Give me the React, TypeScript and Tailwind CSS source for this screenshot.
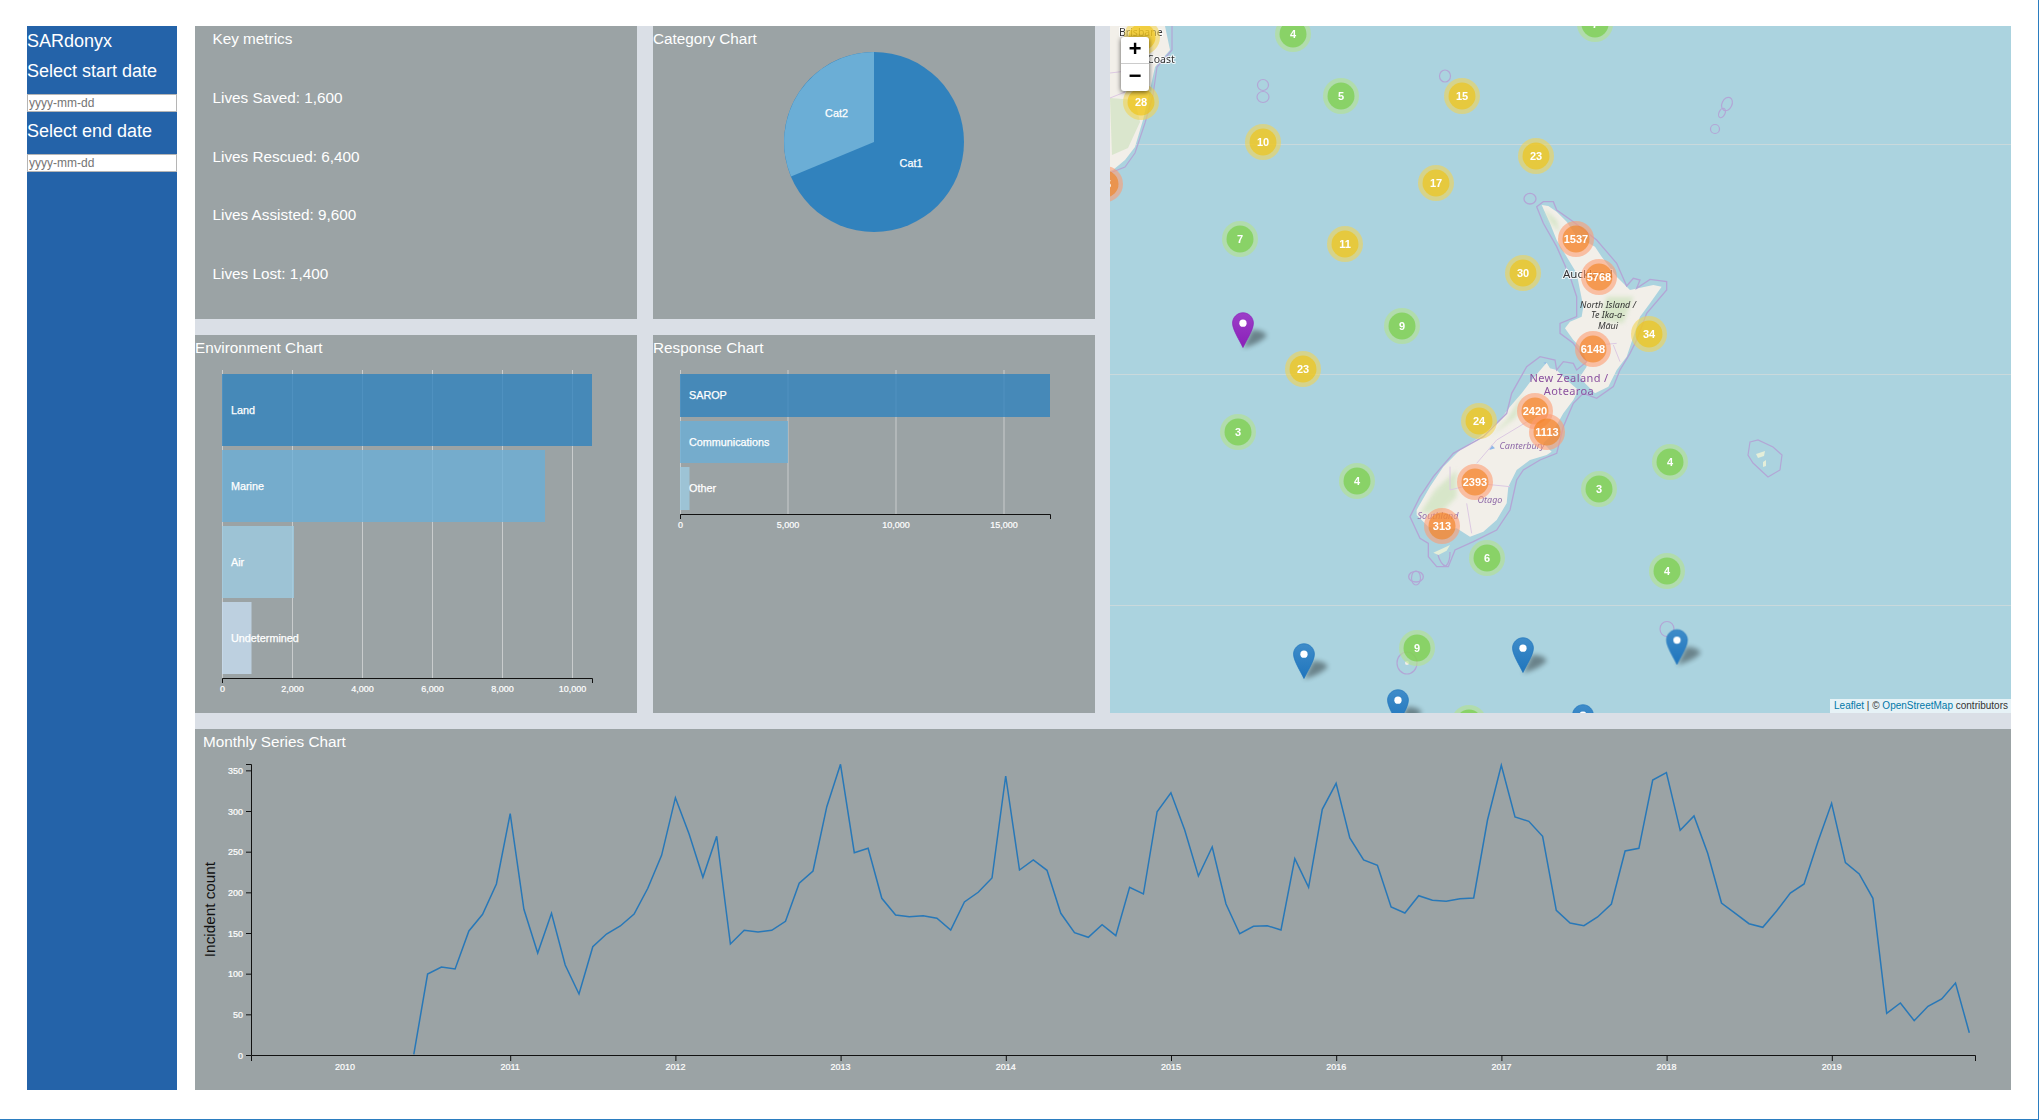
import React from "react";

const C = {
  green: ["#b5e28c99", "#6ecc3999"],
  yellow: ["#f1d35799", "#f0c20c99"],
  orange: ["#fd9c7399", "#f1801799"],
} as const;

const clusters: [number, number, string, keyof typeof C][] = [
  [1142, 37, "", "yellow"],
  [1141, 102, "28", "yellow"],
  [1293, 34, "4", "green"],
  [1341, 96, "5", "green"],
  [1462, 96, "15", "yellow"],
  [1263, 142, "10", "yellow"],
  [1536, 156, "23", "yellow"],
  [1436, 183, "17", "yellow"],
  [1240, 239, "7", "green"],
  [1345, 244, "11", "yellow"],
  [1523, 273, "30", "yellow"],
  [1402, 326, "9", "green"],
  [1105, 184, "65", "orange"],
  [1595, 24, "7", "green"],
  [1576, 239, "1537", "orange"],
  [1599, 277, "5768", "orange"],
  [1649, 334, "34", "yellow"],
  [1593, 349, "6148", "orange"],
  [1479, 421, "24", "yellow"],
  [1535, 411, "2420", "orange"],
  [1547, 432, "1113", "orange"],
  [1670, 462, "4", "green"],
  [1599, 489, "3", "green"],
  [1475, 482, "2393", "orange"],
  [1442, 526, "313", "orange"],
  [1487, 558, "6", "green"],
  [1667, 571, "4", "green"],
  [1303, 369, "23", "yellow"],
  [1238, 432, "3", "green"],
  [1357, 481, "4", "green"],
  [1417, 648, "9", "green"],
  [1469, 723, "", "green"],
];

const series = [
  1003, 762, 741, 747, 633, 583, 492, 281, 568, 699, 580, 735, 822, 680, 642, 618, 582, 505, 406, 233, 342, 472, 349,
  672, 631, 636, 631, 604, 490, 453, 260, 133, 398, 385, 535, 585, 590, 587, 595, 630, 546, 517, 474, 168, 450, 420,
  451, 580, 638, 652, 614, 647, 502, 522, 275, 218, 330, 468, 381, 552, 641, 619, 617, 630, 416, 502, 268, 190, 354,
  420, 436, 561, 579, 527, 541, 544, 536, 534, 300, 136, 291, 304, 349, 571, 609, 617, 591, 552, 393, 385, 180, 158,
  331, 288, 400, 549, 580, 611, 622, 573, 519, 492, 365, 250, 428, 462, 535, 880, 849, 902, 859, 837, 789, 938,
];
const linePoints = series.map((v, i) => `${(345 + (i + 5) * 13.765).toFixed(1)},${(720 + v / 3).toFixed(1)}`).join(" ");

const years = [2010, 2011, 2012, 2013, 2014, 2015, 2016, 2017, 2018, 2019];
const yTicks = [0, 50, 100, 150, 200, 250, 300, 350];

const panel = "bg-[#9ba3a5] text-white";
const title = "h-[26px] leading-[26px] text-[15.3px]";
const tickText = "fill-white stroke-white stroke-[0.2px] text-[9px]";
const barText = "fill-white stroke-white stroke-[0.25px] text-[10.8px]";

function Cluster({ x, y, label, tone }: { x: number; y: number; label: string; tone: keyof typeof C }) {
  return (
    <g>
      <circle cx={x} cy={y} r={18} fill={C[tone][0]} />
      <circle cx={x} cy={y} r={13.5} fill={C[tone][1]} />
      {label && (
        <text x={x} y={y + 4} textAnchor="middle" className="fill-white text-[11px] font-bold">
          {label}
        </text>
      )}
    </g>
  );
}

function Marker({ tipX, tipY, c1, c2, id }: { tipX: number; tipY: number; c1: string; c2: string; id: string }) {
  return (
    <g transform={`translate(${tipX - 10.9} ${tipY - 35.7}) scale(0.87)`}>
      <defs>
        <linearGradient id={id} x1="0" y1="0" x2="0" y2="1">
          <stop offset="0" stopColor={c1} />
          <stop offset="1" stopColor={c2} />
        </linearGradient>
      </defs>
      <path d="M12.5 41L23 20Q36 20 40 27Q32 36 12.5 41Z" fill="#000" opacity="0.38" filter="url(#shadowBlur)" />
      <path
        d="M12.5 .5C5.9 .5 .5 5.9 .5 12.5C.5 20 9 33 12.5 40.5C16 33 24.5 20 24.5 12.5C24.5 5.9 19.1 .5 12.5 .5Z"
        fill={`url(#${id})`}
        stroke={c2}
        strokeWidth="0.8"
      />
      <circle cx="12.5" cy="12.5" r="4.2" fill="#fff" />
    </g>
  );
}

function MapArt() {
  return (
    <svg viewBox="1110 26 901 687" className="block h-full w-full">
      <defs>
        <filter id="shadowBlur" x="-60%" y="-60%" width="220%" height="220%">
          <feGaussianBlur stdDeviation="3.2" />
        </filter>
        <filter id="soft" x="-5%" y="-5%" width="110%" height="110%">
          <feGaussianBlur stdDeviation="0.35" />
        </filter>
        <filter id="patch" x="-20%" y="-20%" width="140%" height="140%">
          <feGaussianBlur stdDeviation="6" />
        </filter>
      </defs>
      <rect x="1110" y="26" width="901" height="687" fill="#abd3df" />
      <g stroke="#c9d9dc" strokeWidth="1">
        <line x1="1110" y1="144.5" x2="2011" y2="144.5" />
        <line x1="1110" y1="374.5" x2="2011" y2="374.5" />
        <line x1="1110" y1="605.5" x2="2011" y2="605.5" />
      </g>
      <g filter="url(#soft)">
        {/* Australian coast */}
        <path d="M1110 26H1165L1170 50L1155 67L1150 90L1143 120L1135 147L1125 160L1113 170L1110 171Z" fill="#f2efe9" />
        <path d="M1110 98L1135 100L1140 122L1128 148L1112 155Z" fill="#d3e4c6" opacity="0.8" />
        <path
          d="M1172 26L1172 50L1157 67L1153 95L1145 123L1135 153L1125 167L1110 173"
          fill="none"
          stroke="#b3a6d6"
          strokeWidth="1.2"
        />
        <path d="M1110 98L1125 92M1110 73L1135 70" fill="none" stroke="#d7bfe0" strokeWidth="0.8" />
        {/* Small islands */}
        <g fill="none" stroke="#b3a6d6" strokeWidth="1.2">
          <ellipse cx="1263" cy="85" rx="5.5" ry="5.5" />
          <ellipse cx="1263" cy="97" rx="6" ry="5.5" />
          <ellipse cx="1445" cy="76" rx="5.5" ry="6" />
          <ellipse cx="1416" cy="578" rx="4.5" ry="7" />
          <path d="M1437 552Q1441 566 1446 566Q1450 562 1450 552" />
          <ellipse cx="1407" cy="663" rx="10" ry="11" />
          <ellipse cx="1667" cy="629" rx="7" ry="7.5" />
          <ellipse cx="1727" cy="104" rx="5" ry="7" transform="rotate(25 1727 104)" />
          <ellipse cx="1715" cy="129" rx="4.5" ry="4.5" />
          <ellipse cx="1722" cy="113" rx="3" ry="5" transform="rotate(25 1722 113)" />
          <path d="M1750 442L1758 440L1773 447L1782 455L1780 470L1768 477L1753 463L1748 455Z" />
        </g>
        <path d="M1756 454L1765 451L1764 456L1758 458Z M1763 462L1766 460L1766 466L1763 467Z" fill="#e4eed9" />
        <circle cx="1407" cy="663" r="2" fill="#f2efe9" />
        {/* New Zealand */}
        <g transform="translate(1400 180) scale(0.33333)">
          <path
            d="M425 75L445 78L470 95L500 125L530 170L585 200L605 230L650 290L690 330L760 315L785 320L750 370L720 410L700 470L680 530L650 570L625 620L585 640L555 610L540 590L560 560L550 510L520 480L495 445L510 425L545 410L550 380L540 330L530 280L500 230L470 180L450 130Z"
            fill="#f2efe9"
          />
          <path
            d="M440 548L450 565L470 570L500 600L535 630L520 660L490 700L450 770L430 790L455 815L440 825L390 840L350 870L325 920L320 970L290 1020L250 1055L210 1070L170 1045L130 1050L85 1040L50 1005L50 990L90 920L130 860L180 810L240 770L300 720L330 680L365 640L395 600Z"
            fill="#f2efe9"
          />
          <path d="M100 1118L150 1095L140 1112L115 1125Z" fill="#e4eed9" />
          <g fill="#cfe3bf" opacity="0.75" filter="url(#patch)">
            <path d="M430 85L470 120L480 160L450 125Z" />
            <path d="M620 350L700 350L670 430L600 420Z" />
            <path d="M60 1000L105 930L170 870L170 950L120 1000Z" />
            <path d="M370 640L320 720L270 770L350 710Z" />
          </g>
          <path d="M275 795L285 805L268 810Z" fill="#8fb8e8" />
          <path d="M430 548L440 546L436 552Z" fill="#8fb8e8" />
          <path
            d="M410 80L430 65L460 65L470 90L520 125L590 180L620 215L650 250L680 318L700 295L720 300L710 325L750 298L800 305L800 330L740 400L710 480L690 520L660 570L640 620L590 655L550 640L520 670L490 740L470 820L420 840L370 870L350 900L330 990L290 1050L220 1085L165 1110L145 1160L110 1160L85 1130L85 1090L60 1075L30 1010L60 950L100 890L160 820L250 770L320 700L335 640L380 560L420 530L465 540L470 570L490 545L520 550L530 570L560 545L520 490L480 460L480 430L530 410L530 350L510 290L470 200L430 130Z"
            fill="none"
            stroke="#b3a6d6"
            strokeWidth="4"
          />
          <ellipse cx="390" cy="56" rx="18" ry="16" fill="none" stroke="#b3a6d6" strokeWidth="4" />
          <ellipse cx="48" cy="1190" rx="22" ry="16" fill="none" stroke="#b3a6d6" strokeWidth="4" />
          <path
            d="M640 495L660 545M150 860L150 930L230 910L330 920M200 970L215 1060M230 850L290 780L440 690M540 500L650 490"
            fill="none"
            stroke="#dcc9e2"
            strokeWidth="3"
          />
        </g>
        {/* Place names */}
        <g fontFamily="'Noto Sans', 'Open Sans', sans-serif" fill="#333" stroke="#ffffffcc" strokeWidth="2" paintOrder="stroke">
          <text x="1119" y="36" className="text-[10.5px]">Brisbane</text>
          <text x="1147" y="63" className="text-[10.5px]">Coast</text>
          <text x="1563" y="278" className="text-[11.5px]">Auckland</text>
        </g>
        <g fontFamily="'Noto Sans', 'Open Sans', sans-serif" textAnchor="middle">
          <g className="text-[9px] italic" fill="#333">
            <text x="1608" y="307.5">North Island /</text>
            <text x="1608" y="318">Te Ika-a-</text>
            <text x="1608" y="329">Māui</text>
          </g>
          <g className="text-[11px] tracking-[0.4px]" fill="#8a4f9e">
            <text x="1569" y="382">New Zealand /</text>
            <text x="1569" y="395">Aotearoa</text>
          </g>
          <g className="text-[9px] italic" fill="#8f6aa8">
            <text x="1522" y="449">Canterbury</text>
            <text x="1490" y="503">Otago</text>
            <text x="1438" y="519">Southland</text>
          </g>
        </g>
      </g>
      <g filter="url(#soft)">
        {clusters.map(([x, y, label, tone], i) => (
          <Cluster key={i} x={x} y={y} label={label} tone={tone} />
        ))}
      </g>
      <Marker id="mPurple" tipX={1243} tipY={348} c1="#9c3fc8" c2="#8a1fb8" />
      <Marker id="mB1" tipX={1304} tipY={679} c1="#3f8cc9" c2="#1f75bd" />
      <Marker id="mB2" tipX={1523} tipY={673} c1="#3f8cc9" c2="#1f75bd" />
      <Marker id="mB3" tipX={1677} tipY={665} c1="#3f8cc9" c2="#1f75bd" />
      <Marker id="mB4" tipX={1398} tipY={725} c1="#3f8cc9" c2="#1f75bd" />
      <Marker id="mB5" tipX={1583} tipY={740} c1="#3f8cc9" c2="#1f75bd" />
    </svg>
  );
}

function fmt(n: number) {
  return n.toLocaleString("en-US");
}

function BarChart({
  box,
  x0,
  x1,
  axisY,
  ticks,
  bars,
}: {
  box: string;
  x0: number;
  x1: number;
  axisY: number;
  ticks: [number, number][];
  bars: { label: string; y1: number; y2: number; end: number; fill: string; ly: number }[];
}) {
  return (
    <svg viewBox={box} className="block w-full flex-1">
      {ticks.map(([v, x]) => (
        <line key={v} x1={x + 0.5} x2={x + 0.5} y1={370} y2={axisY} stroke="#c9cccd" strokeWidth="1" />
      ))}
      {bars.map((b) => (
        <rect key={b.label} x={x0} y={b.y1} width={b.end - x0} height={b.y2 - b.y1} fill={b.fill} fillOpacity="0.8" />
      ))}
      {bars.map((b) => (
        <text key={b.label} x={x0 + 9} y={b.ly + 3.5} className={barText}>
          {b.label}
        </text>
      ))}
      <path d={`M${x0 + 0.5} ${axisY + 5}V${axisY + 0.5}H${x1 + 0.5}V${axisY + 5}`} fill="none" stroke="#111" />
      {ticks.map(([v, x]) => (
        <text key={v} x={x + 0.5} y={axisY + 14} textAnchor="middle" className={tickText}>
          {fmt(v)}
        </text>
      ))}
    </svg>
  );
}

export default function App() {
  return (
    <div className="flex h-[1120px] w-[2039px] border-r border-b border-[#2b7dc0] bg-white pt-[26px] pl-[27px] font-['Liberation_Sans',sans-serif]">
      <aside className="flex h-[1064px] w-[150px] flex-col bg-[#2463a9] text-[18px] text-white">
        <div className="h-[30px] leading-[30px]">SARdonyx</div>
        <div className="h-[38px] leading-[30px]">Select start date</div>
        <input
          type="text"
          placeholder="yyyy-mm-dd"
          className="h-[18px] w-full border border-[#b5b5b5] bg-white px-[1px] text-[12px] leading-none text-black placeholder:text-[#757575]"
        />
        <div className="h-[42px] leading-[38px]">Select end date</div>
        <input
          type="text"
          placeholder="yyyy-mm-dd"
          className="h-[18px] w-full border border-[#b5b5b5] bg-white px-[1px] text-[12px] leading-none text-black placeholder:text-[#757575]"
        />
      </aside>

      <main className="ml-[18px] grid h-[1064px] w-[1816px] grid-cols-[458px_457px_901px] grid-rows-[293px_378px_361px] gap-y-4 bg-[#dadfe6]">
        <section className={`${panel} w-[442px] pl-[17.5px]`}>
          <h2 className={title}>Key metrics</h2>
          <ul className="mt-[33px] flex flex-col gap-[32.5px] text-[15.3px] leading-[26px]">
            <li>Lives Saved: 1,600</li>
            <li>Lives Rescued: 6,400</li>
            <li>Lives Assisted: 9,600</li>
            <li>Lives Lost: 1,400</li>
          </ul>
        </section>

        <section className={`${panel} flex w-[442px] flex-col`}>
          <h2 className={title}>Category Chart</h2>
          <svg viewBox="653 52 442 267" className="block w-full flex-1">
            <circle cx="874" cy="142" r="90" fill="#3182bd" />
            <path d="M874 142L874 52A90 90 0 0 0 791 176.5Z" fill="#6baed6" />
            <text x="836.5" y="116.5" textAnchor="middle" className={barText}>
              Cat2
            </text>
            <text x="911" y="166.5" textAnchor="middle" className={barText}>
              Cat1
            </text>
          </svg>
        </section>

        <section className="relative row-span-2 overflow-hidden bg-[#abd3df]">
          <MapArt />
          <div className="absolute top-[11px] left-[11px] flex w-[28px] flex-col overflow-hidden rounded-[3px] bg-white font-['Liberation_Mono',monospace] text-[22px] font-bold text-black shadow-[0_1px_5px_#000000a6]">
            <div className="flex h-[27px] items-center justify-center border-b border-[#cccccc]">+</div>
            <div className="flex h-[27px] items-center justify-center">−</div>
          </div>
          <div className="absolute right-0 bottom-0 h-[14px] bg-[#ffffffb3] pr-[3px] pl-[4px] text-[10px] leading-[14px] whitespace-nowrap text-[#333333]">
            <span className="text-[#0078a8]">Leaflet</span> | © <span className="text-[#0078a8]">OpenStreetMap</span>{" "}
            contributors
          </div>
        </section>

        <section className={`${panel} flex w-[442px] flex-col`}>
          <h2 className={title}>Environment Chart</h2>
          <BarChart
            box="195 361 442 352"
            x0={222}
            x1={592}
            axisY={678}
            ticks={[
              [0, 222],
              [2000, 292],
              [4000, 362],
              [6000, 432],
              [8000, 502],
              [10000, 572],
            ]}
            bars={[
              { label: "Land", y1: 374, y2: 446, end: 592, fill: "#3182bd", ly: 410 },
              { label: "Marine", y1: 450, y2: 522, end: 545, fill: "#6baed6", ly: 486 },
              { label: "Air", y1: 526, y2: 598, end: 294, fill: "#9ecae1", ly: 562 },
              { label: "Undetermined", y1: 602, y2: 674, end: 251.5, fill: "#c6dbef", ly: 638 },
            ]}
          />
        </section>

        <section className={`${panel} flex w-[442px] flex-col`}>
          <h2 className={title}>Response Chart</h2>
          <BarChart
            box="653 361 442 352"
            x0={680}
            x1={1050}
            axisY={514}
            ticks={[
              [0, 680],
              [5000, 787.5],
              [10000, 895.5],
              [15000, 1003.5],
            ]}
            bars={[
              { label: "SAROP", y1: 374, y2: 417, end: 1050, fill: "#3182bd", ly: 395 },
              { label: "Communications", y1: 421, y2: 463, end: 788, fill: "#6baed6", ly: 442 },
              { label: "Other", y1: 467, y2: 510, end: 689.5, fill: "#9ecae1", ly: 488 },
            ]}
          />
        </section>

        <section className={`${panel} col-span-3 flex flex-col`}>
          <h2 className={`${title} pl-2`}>Monthly Series Chart</h2>
          <svg viewBox="195 755 1816 335" className="block w-full flex-1">
            <path d="M246 764.5H251.5V1055.5H1975.5V1061" fill="none" stroke="#111" />
            <path d="M251.5 1055.5V1061" fill="none" stroke="#111" />
            {yTicks.map((v) => {
              const y = 1055 - v * 0.8133;
              return (
                <g key={v}>
                  <line x1="246" x2="251" y1={y + 0.5} y2={y + 0.5} stroke="#111" />
                  <text x="243" y={y + 3.5} textAnchor="end" className={tickText}>
                    {v}
                  </text>
                </g>
              );
            })}
            {years.map((yr, i) => {
              const x = 345 + i * 165.2;
              return (
                <g key={yr}>
                  {i > 0 && <line x1={x + 0.5} x2={x + 0.5} y1="1055" y2="1061" stroke="#111" />}
                  <text x={x} y="1070" textAnchor="middle" className={tickText}>
                    {yr}
                  </text>
                </g>
              );
            })}
            <text
              transform="translate(215 909.5) rotate(-90)"
              textAnchor="middle"
              className="fill-[#111111] text-[15.3px]"
            >
              Incident count
            </text>
            <polyline points={linePoints} fill="none" stroke="#2878b8" strokeWidth="1.5" />
          </svg>
        </section>
      </main>
    </div>
  );
}
